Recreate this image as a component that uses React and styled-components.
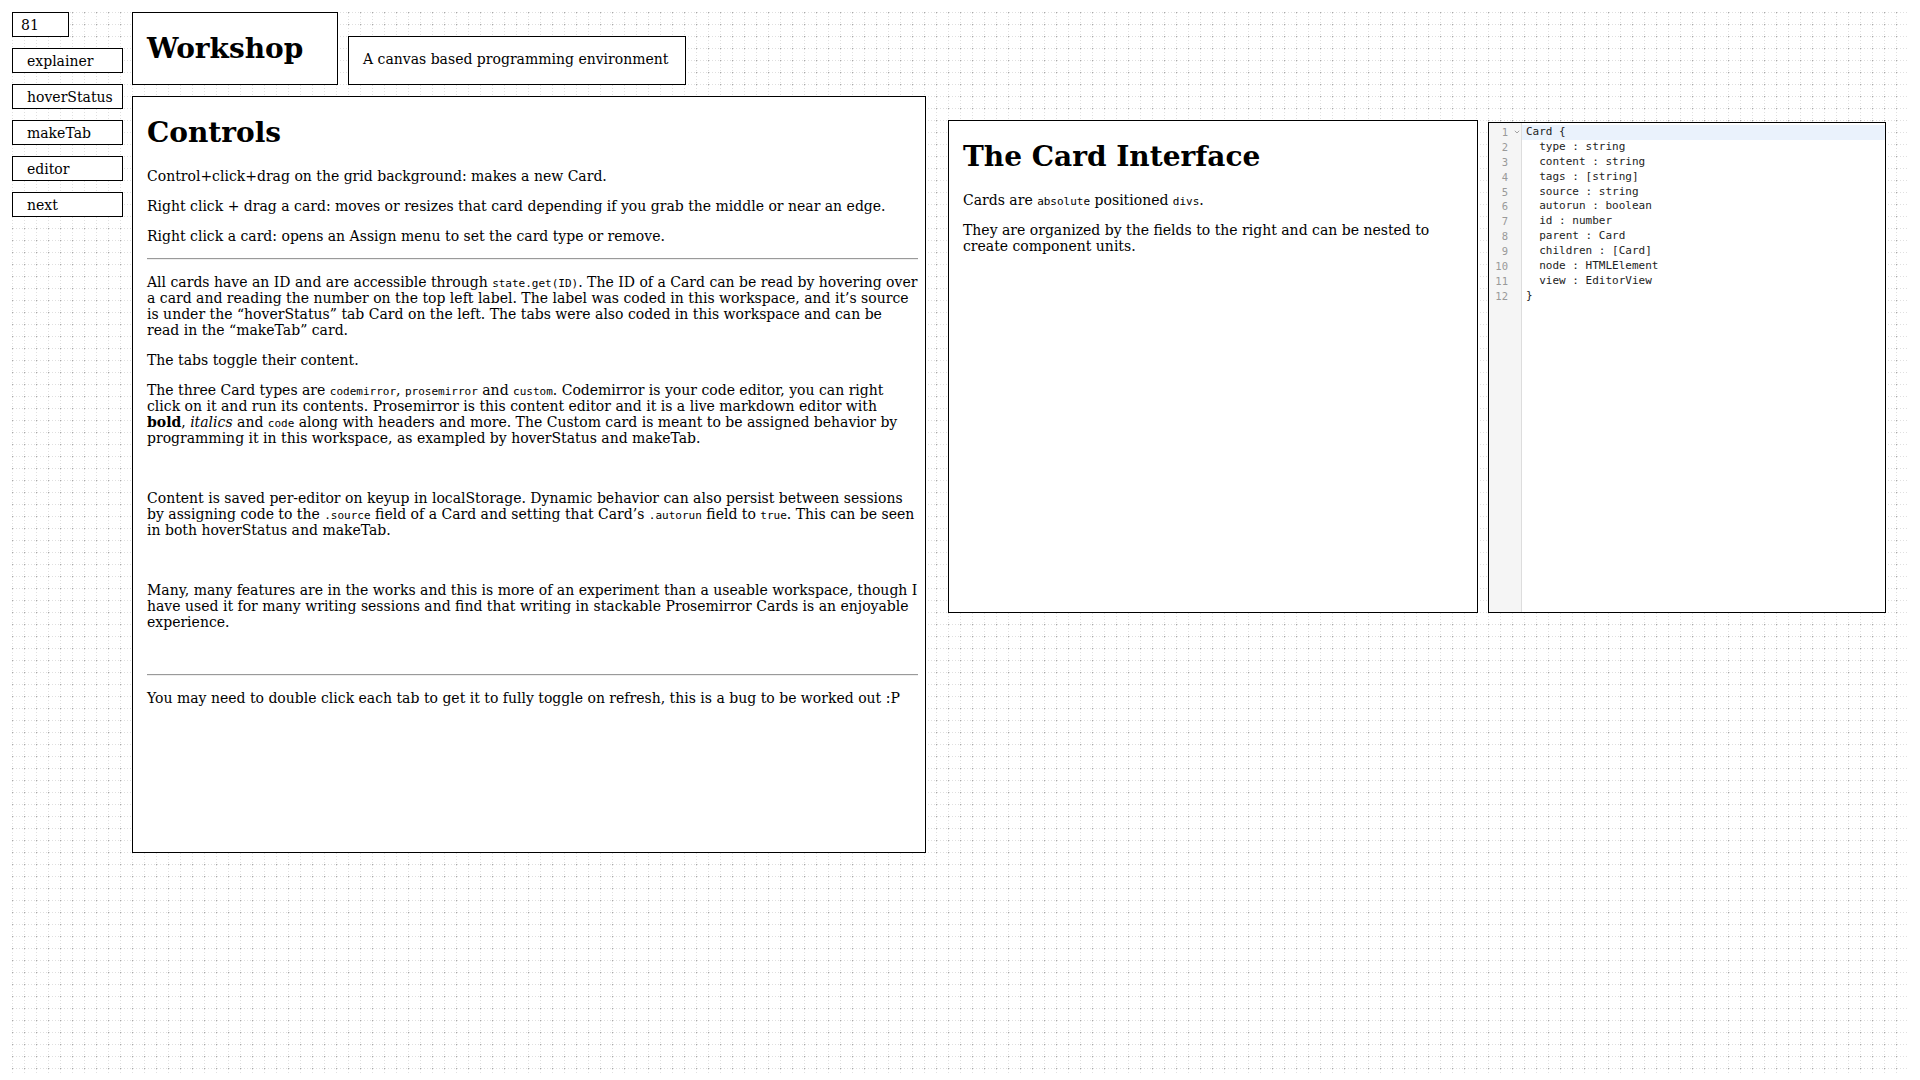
import React from "react";
import styled, { createGlobalStyle } from "styled-components";

const GlobalStyle = createGlobalStyle`
  html, body {
    margin: 0;
    padding: 0;
    background: #ffffff;
  }
  body {
    font-family: "DejaVu Serif", serif;
    font-size: 14px;
    color: #000;
    width: 1920px;
    height: 1080px;
    overflow: hidden;
  }
`;

const Canvas = styled.div`
  position: relative;
  margin: 12px;
  width: 1896px;
  height: 1062px;
`;

const GridLayer = styled.div`
  position: absolute;
  inset: 0;
  z-index: 0;
  pointer-events: none;
  background-image: conic-gradient(at 1px 1px, transparent 0 270deg, #a8a8a8 270deg 360deg);
  background-size: 12px 12px;
  &::before,
  &::after {
    content: "";
    position: absolute;
    inset: 0;
  }
  &::before {
    background-image: linear-gradient(to bottom, #e0e0e0 1px, transparent 1px);
    background-size: 12px 12px;
    -webkit-mask-image: repeating-linear-gradient(to right, transparent 0 1px, #000 1px 2px, transparent 2px 3px);
    mask-image: repeating-linear-gradient(to right, transparent 0 1px, #000 1px 2px, transparent 2px 3px);
  }
  &::after {
    background-image: linear-gradient(to right, #e0e0e0 1px, transparent 1px);
    background-size: 12px 12px;
    -webkit-mask-image: repeating-linear-gradient(to bottom, transparent 0 1px, #000 1px 2px, transparent 2px 3px);
    mask-image: repeating-linear-gradient(to bottom, transparent 0 1px, #000 1px 2px, transparent 2px 3px);
  }
`;

const Card = styled.div`
  position: absolute;
  z-index: 1;
  box-sizing: border-box;
  left: ${(p) => p.$x}px;
  top: ${(p) => p.$y}px;
  width: ${(p) => p.$w}px;
  height: ${(p) => p.$h}px;
  background: #fff;
  border: 1px solid #000;
  padding: ${(p) => p.$pad || "0 7px 0 14px"};
  overflow: hidden;
`;

const TabStack = styled.div`
  position: absolute;
  z-index: 1;
  left: 0;
  top: 36px;
  display: flex;
  flex-direction: column;
  gap: 11px;
`;

const Tab = styled.div`
  box-sizing: border-box;
  width: 111px;
  height: 25px;
  border: 1px solid #000;
  background: #fff;
  padding: 0 0 0 14px;
  display: flex;
  align-items: center;
  font-size: 14px;
  line-height: 16px;
`;

const IdLabel = styled(Tab)`
  position: absolute;
  z-index: 1;
  left: 0;
  top: 0;
  width: 57px;
  padding-left: 8px;
`;

const Title = styled.h1`
  font-size: 28px;
  font-weight: bold;
  margin: 0.67em 0;
`;

const P = styled.p`
  margin: 14px 0;
  line-height: normal;
`;

const Rule = styled.hr`
  margin: 7px 0;
  border: 0;
  border-top: 1px solid #9a9a9a;
  border-bottom: 1px solid #eeeeee;
  height: 0;
`;

const Code = styled.code`
  font-family: "DejaVu Sans Mono", monospace;
  font-size: 11px;
  line-height: 1;
`;

const Editor = styled.div`
  display: flex;
  height: 100%;
  font-family: "DejaVu Sans Mono", monospace;
  font-size: 11px;
  line-height: 14.9px;
`;

const Gutter = styled.div`
  width: 32px;
  flex: none;
  background: #f5f5f5;
  border-right: 1px solid #dddddd;
  padding-top: 2px;
  color: #999;
  font-size: 10.5px;
`;

const GutterRow = styled.div`
  display: flex;
  align-items: center;
  height: 14.9px;
`;

const LineNo = styled.span`
  width: 24px;
  text-align: right;
  box-sizing: border-box;
  padding-right: 5px;
`;

const FoldSlot = styled.span`
  width: 8px;
  display: flex;
  justify-content: center;
  align-items: center;
  color: #888;
`;

const Content = styled.div`
  flex: 1;
  padding-top: 2px;
  color: #222;
`;

const Line = styled.div`
  height: 14.9px;
  padding-left: 4px;
  white-space: pre;
  background: ${(p) => (p.$active ? "#eaf2fc" : "transparent")};
`;

const FoldIcon = () => (
  <svg width="6" height="4" viewBox="0 0 6 4" aria-hidden="true">
    <path d="M0.8 0.8 L3 3 L5.2 0.8" fill="none" stroke="#999" strokeWidth="0.9" />
  </svg>
);

const codeLines = [
  "Card {",
  "  type : string",
  "  content : string",
  "  tags : [string]",
  "  source : string",
  "  autorun : boolean",
  "  id : number",
  "  parent : Card",
  "  children : [Card]",
  "  node : HTMLElement",
  "  view : EditorView",
  "}",
];

const tabs = ["explainer", "hoverStatus", "makeTab", "editor", "next"];

export default function App() {
  return (
    <>
      <GlobalStyle />
      <Canvas>
        <GridLayer />
        <IdLabel>81</IdLabel>
        <TabStack>
          {tabs.map((t) => (
            <Tab key={t}>{t}</Tab>
          ))}
        </TabStack>

        <Card $x={120} $y={0} $w={206} $h={73} $pad="0 14px">
          <Title>Workshop</Title>
        </Card>

        <Card $x={336} $y={24} $w={338} $h={49} $pad="0 14px">
          <P>A canvas based programming environment</P>
        </Card>

        <Card $x={120} $y={84} $w={794} $h={757}>
          <Title>Controls</Title>
          <P>Control+click+drag on the grid background: makes a new Card.</P>
          <P>Right click + drag a card: moves or resizes that card depending if you grab the middle or near an edge.</P>
          <P>Right click a card: opens an Assign menu to set the card type or remove.</P>
          <Rule />
          <P>
            All cards have an ID and are accessible through <Code>state.get(ID)</Code>. The ID of a Card can be read by hovering over a card and reading the number on the top left label. The label was coded in this workspace, and it’s source is under the “hoverStatus” tab Card on the left. The tabs were also coded in this workspace and can be read in the “makeTab” card.
          </P>
          <P>The tabs toggle their content.</P>
          <P>
            The three Card types are <Code>codemirror</Code>, <Code>prosemirror</Code> and <Code>custom</Code>. Codemirror is your code editor, you can right click on it and run its contents. Prosemirror is this content editor and it is a live markdown editor with <strong>bold</strong>, <em>italics</em> and <Code>code</Code> along with headers and more. The Custom card is meant to be assigned behavior by programming it in this workspace, as exampled by hoverStatus and makeTab.
          </P>
          <P>
            <br />
          </P>
          <P>
            Content is saved per-editor on keyup in localStorage. Dynamic behavior can also persist between sessions by assigning code to the <Code>.source</Code> field of a Card and setting that Card’s <Code>.autorun</Code> field to <Code>true</Code>. This can be seen in both hoverStatus and makeTab.
          </P>
          <P>
            <br />
          </P>
          <P>
            Many, many features are in the works and this is more of an experiment than a useable workspace, though I have used it for many writing sessions and find that writing in stackable Prosemirror Cards is an enjoyable experience.
          </P>
          <P>
            <br />
          </P>
          <Rule />
          <P>You may need to double click each tab to get it to fully toggle on refresh, this is a bug to be worked out :P</P>
        </Card>

        <Card $x={936} $y={108} $w={530} $h={493} $pad="0 14px">
          <Title>The Card Interface</Title>
          <P>
            Cards are <Code>absolute</Code> positioned <Code>divs</Code>.
          </P>
          <P>They are organized by the fields to the right and can be nested to create component units.</P>
        </Card>

        <Card $x={1476} $y={110} $w={398} $h={491} $pad="0">
          <Editor>
            <Gutter>
              {codeLines.map((_, i) => (
                <GutterRow key={i}>
                  <LineNo>{i + 1}</LineNo>
                  <FoldSlot>{i === 0 ? <FoldIcon /> : null}</FoldSlot>
                </GutterRow>
              ))}
            </Gutter>
            <Content>
              {codeLines.map((l, i) => (
                <Line key={i} $active={i === 0}>
                  {l}
                </Line>
              ))}
            </Content>
          </Editor>
        </Card>
      </Canvas>
    </>
  );
}
